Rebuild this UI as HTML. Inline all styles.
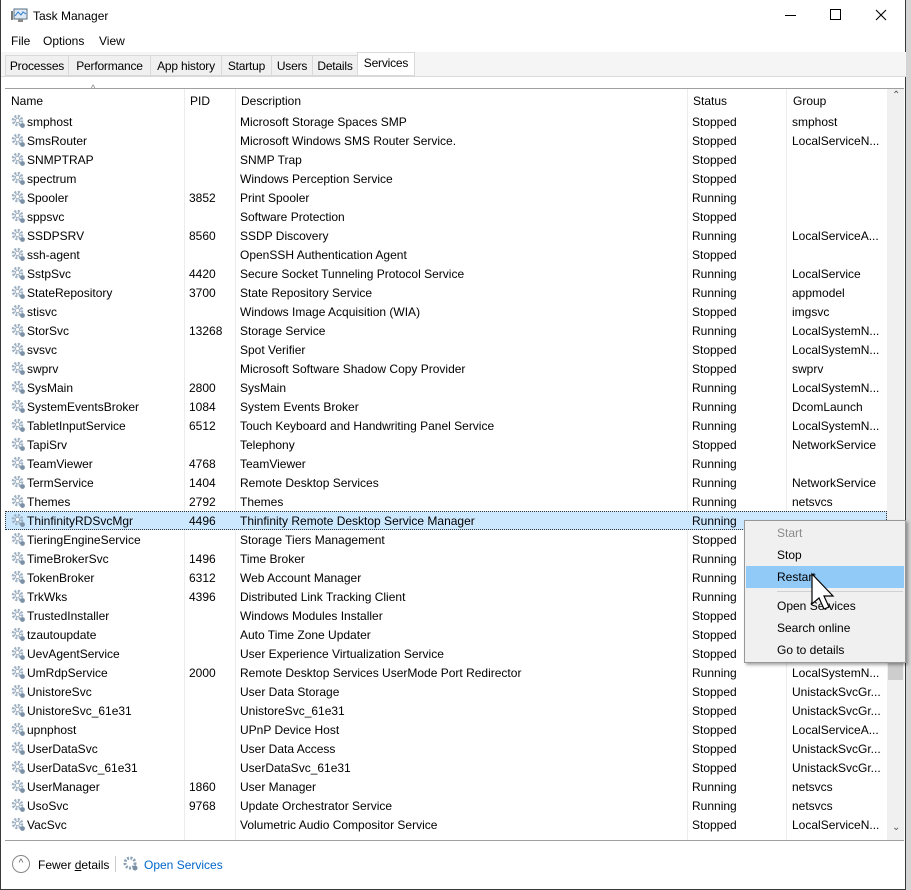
<!DOCTYPE html>
<html><head><meta charset="utf-8"><style>
*{box-sizing:border-box;margin:0;padding:0}
body{width:911px;height:890px;background:#d4d4d4;font-family:"Liberation Sans",sans-serif;font-size:12px;color:#000;position:relative;overflow:hidden}
.win{position:absolute;left:0;top:0;width:906px;height:890px;background:#fff;border:1px solid #3a3a3a;border-top:none}
.abs{position:absolute;white-space:nowrap}
.tabs{position:absolute;left:4px;top:55px;height:22px}
.tab{position:absolute;top:0;height:21px;border:1px solid #d9d9d9;border-right:none;background:#f0f0f0;padding-top:3px;text-align:center;font-size:12px;letter-spacing:-0.2px}
.tab.act{background:#fff;border:1px solid #d9d9d9;height:24px;top:-3px;padding-top:3px}
.row{position:absolute;left:4px;width:882px;height:19px}
.row span{position:absolute;top:3px;white-space:nowrap}
.sel{background:#cce8ff;outline:1px dotted #333;outline-offset:-1px}
.g{position:absolute;left:6px;top:2px}
.vl{position:absolute;top:89px;height:751px;width:1px;background:#ececec}
.menu{position:absolute;left:744px;top:520px;width:162px;height:143px;background:#f0f0f0;border:1px solid #979797;box-shadow:2px 2px 3px rgba(0,0,0,.35)}
.mi{position:absolute;left:32px;font-size:12px}
</style></head><body>
<div class="win">
<svg class="abs" style="left:10px;top:8px" width="17" height="15" viewBox="0 0 17 15"><rect x="3" y="1" width="13" height="10" fill="#dfe9f3" stroke="#5a6d80"/><path d="M4 8l3-4 3 3 2-3 3 2" fill="none" stroke="#2b7bd0"/><rect x="7" y="11" width="5" height="3" fill="#8a8a8a"/><rect x="0" y="3" width="2" height="9" fill="#7a7a7a"/></svg>
<div class="abs" style="left:32px;top:9px">Task Manager</div>
<div class="abs" style="left:784px;top:15px;width:11px;height:1px;background:#000"></div>
<div class="abs" style="left:829px;top:9px;width:11px;height:11px;border:1px solid #000"></div>
<svg class="abs" style="left:874px;top:9px" width="12" height="12" viewBox="0 0 12 12"><path d="M1 1l10 10M11 1L1 11" stroke="#000" stroke-width="1.1"/></svg>
<div class="abs" style="left:10px;top:34px">File</div>
<div class="abs" style="left:42px;top:34px">Options</div>
<div class="abs" style="left:98px;top:34px">View</div>
<div class="abs" style="left:0;top:52px;width:905px;height:25px;background:#f5f5f5"></div>
<div class="tabs">
<div class="tab" style="left:0;width:63px">Processes</div>
<div class="tab" style="left:63px;width:82px">Performance</div>
<div class="tab" style="left:145px;width:71px">App history</div>
<div class="tab" style="left:216px;width:50px">Startup</div>
<div class="tab" style="left:266px;width:41px">Users</div>
<div class="tab" style="left:307px;width:45px">Details</div>
<div class="tab act" style="left:352px;width:58px">Services</div>
</div>
<div class="abs" style="left:0;top:76px;width:905px;height:1px;background:#dadada"></div>
<div class="abs" style="left:4px;top:88px;width:899px;height:1px;background:#a0a0a0"></div>
<div class="abs" style="left:90px;top:83px;font-size:9px;color:#777">^</div>
<div class="abs" style="left:10px;top:94px">Name</div>
<div class="abs" style="left:189px;top:94px">PID</div>
<div class="abs" style="left:240px;top:94px">Description</div>
<div class="abs" style="left:692px;top:94px">Status</div>
<div class="abs" style="left:792px;top:94px">Group</div>
<div class="vl" style="left:183px"></div><div class="vl" style="left:234px"></div><div class="vl" style="left:686px"></div><div class="vl" style="left:785px"></div>
<div class="abs" style="left:886px;top:89px;width:17px;height:751px;background:#f0f0f0"></div>
<div class="abs" style="left:891px;top:90px;font-size:10px;color:#555">⌃</div>
<div class="abs" style="left:891px;top:822px;font-size:10px;color:#555">⌄</div>
<div class="abs" style="left:887px;top:600px;width:15px;height:80px;background:#cdcdcd"></div>
<div id="rows"></div>
<div class="abs" style="left:4px;top:840px;width:899px;height:1px;background:#a0a0a0"></div>
<div class="abs" style="left:11px;top:855px;width:18px;height:18px;border:1px solid #888;border-radius:50%;font-size:10px;color:#555;text-align:center;line-height:16px">^</div>
<div class="abs" style="left:37px;top:858px">Fewer <u>d</u>etails</div>
<div class="abs" style="left:114px;top:856px;width:1px;height:16px;background:#ccc"></div>
<svg class="abs" style="left:122px;top:856px" width="16" height="16" viewBox="0 0 16 16"><circle cx="7" cy="7" r="5" fill="none" stroke="#8aa0b5" stroke-width="3" stroke-dasharray="2 1.4"/><circle cx="7" cy="7" r="2" fill="#fff"/><circle cx="12" cy="12" r="2.5" fill="#7a8ea3"/></svg>
<div class="abs" style="left:143px;top:858px;color:#0066cc">Open Services</div>
</div>
<div class="menu">
<div class="mi" style="top:5px;color:#8a8a8a">Start</div>
<div class="mi" style="top:27px">Stop</div>
<div class="abs" style="left:1px;top:45px;width:158px;height:22px;background:#91c9f7"></div>
<div class="mi" style="top:49px">Restart</div>
<div class="abs" style="left:32px;top:70px;width:126px;height:1px;background:#d0d0d0"></div>
<div class="mi" style="top:78px">Open Services</div>
<div class="mi" style="top:100px">Search online</div>
<div class="mi" style="top:122px">Go to details</div>
</div>
<svg class="abs" style="left:810px;top:572px" width="30" height="44" viewBox="0 0 30 44"><path d="M2 2v30l7-6 5 11 5-2-5-11h9z" fill="#fff" stroke="#000" stroke-width="1.2"/></svg>
<script>
var d=[["smphost","","Microsoft Storage Spaces SMP","Stopped","smphost"],["SmsRouter","","Microsoft Windows SMS Router Service.","Stopped","LocalServiceN..."],["SNMPTRAP","","SNMP Trap","Stopped",""],["spectrum","","Windows Perception Service","Stopped",""],["Spooler","3852","Print Spooler","Running",""],["sppsvc","","Software Protection","Stopped",""],["SSDPSRV","8560","SSDP Discovery","Running","LocalServiceA..."],["ssh-agent","","OpenSSH Authentication Agent","Stopped",""],["SstpSvc","4420","Secure Socket Tunneling Protocol Service","Running","LocalService"],["StateRepository","3700","State Repository Service","Running","appmodel"],["stisvc","","Windows Image Acquisition (WIA)","Stopped","imgsvc"],["StorSvc","13268","Storage Service","Running","LocalSystemN..."],["svsvc","","Spot Verifier","Stopped","LocalSystemN..."],["swprv","","Microsoft Software Shadow Copy Provider","Stopped","swprv"],["SysMain","2800","SysMain","Running","LocalSystemN..."],["SystemEventsBroker","1084","System Events Broker","Running","DcomLaunch"],["TabletInputService","6512","Touch Keyboard and Handwriting Panel Service","Running","LocalSystemN..."],["TapiSrv","","Telephony","Stopped","NetworkService"],["TeamViewer","4768","TeamViewer","Running",""],["TermService","1404","Remote Desktop Services","Running","NetworkService"],["Themes","2792","Themes","Running","netsvcs"],["ThinfinityRDSvcMgr","4496","Thinfinity Remote Desktop Service Manager","Running",""],["TieringEngineService","","Storage Tiers Management","Stopped",""],["TimeBrokerSvc","1496","Time Broker","Running",""],["TokenBroker","6312","Web Account Manager","Running",""],["TrkWks","4396","Distributed Link Tracking Client","Running",""],["TrustedInstaller","","Windows Modules Installer","Stopped",""],["tzautoupdate","","Auto Time Zone Updater","Stopped",""],["UevAgentService","","User Experience Virtualization Service","Stopped",""],["UmRdpService","2000","Remote Desktop Services UserMode Port Redirector","Running","LocalSystemN..."],["UnistoreSvc","","User Data Storage","Stopped","UnistackSvcGr..."],["UnistoreSvc_61e31","","UnistoreSvc_61e31","Stopped","UnistackSvcGr..."],["upnphost","","UPnP Device Host","Stopped","LocalServiceA..."],["UserDataSvc","","User Data Access","Stopped","UnistackSvcGr..."],["UserDataSvc_61e31","","UserDataSvc_61e31","Stopped","UnistackSvcGr..."],["UserManager","1860","User Manager","Running","netsvcs"],["UsoSvc","9768","Update Orchestrator Service","Running","netsvcs"],["VacSvc","","Volumetric Audio Compositor Service","Stopped","LocalServiceN..."]];
var g='<svg class="g" width="15" height="15" viewBox="0 0 15 15"><circle cx="6.5" cy="6.5" r="4.3" fill="none" stroke="#9fb2c4" stroke-width="3" stroke-dasharray="2 1.4"/><circle cx="6.5" cy="6.5" r="2" fill="#fff" stroke="#8a9cae" stroke-width=".8"/><circle cx="11.5" cy="11.5" r="2.4" fill="#7d91a6"/></svg>';
var h='';d.forEach(function(r,i){h+='<div class="row'+(i==21?' sel':'')+'" style="top:'+(112+i*19)+'px">'+g+'<span style="left:22px">'+r[0]+'</span><span style="left:184px">'+r[1]+'</span><span style="left:235px">'+r[2]+'</span><span style="left:687px">'+r[3]+'</span><span style="left:787px">'+r[4]+'</span></div>'});
document.getElementById('rows').innerHTML=h;
</script>
</body></html>
